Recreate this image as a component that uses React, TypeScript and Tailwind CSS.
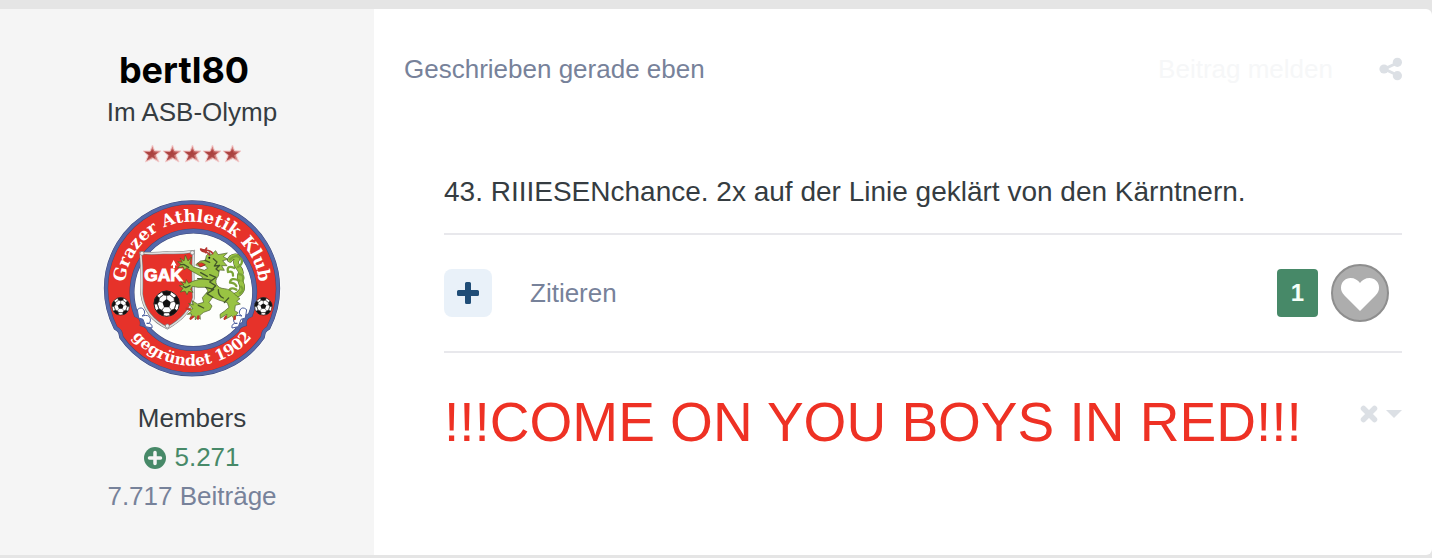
import { useId } from "react";

interface Author {
  name: string;
  title: string;
  rank: number;
  group: string;
  reputation: string;
  posts: string;
}

const author: Author = {
  name: "bertl80",
  title: "Im ASB-Olymp",
  rank: 5,
  group: "Members",
  reputation: "5.271",
  posts: "7.717 Beiträge",
};

const OUTER_RING =
  "M95 440C92 428 95 422 78 412A258 258 0 1 1 536 412C519 422 522 428 519 440A258 258 0 0 1 95 440Z";
const INNER_RING =
  "M140 373A184 184 0 1 1 482 373Q462 380 464 400 446 404 442 419A184 184 0 0 1 180 419Q176 404 158 400 160 380 140 373Z";
const SHIELD =
  "M153 187Q190 190 232 186 270 188 312 182Q308 240 312 320 300 375 233 412 165 380 156 310 158 240 153 187Z";
const TAIL =
  "M402 318C425 322 446 315 455 300 466 283 443 270 452 251 462 234 429 226 441 208 451 195 430 192 421 207";

function RankStar() {
  const id = useId();
  return (
    <svg className="h-5 w-5" viewBox="0 0 20 20" aria-hidden="true">
      <defs>
        <linearGradient id={id} x1="0.2" y1="0" x2="0.7" y2="1">
          <stop offset="0" stopColor="#f6bcbc" />
          <stop offset="0.45" stopColor="#c05a58" />
          <stop offset="1" stopColor="#e0a3a1" />
        </linearGradient>
      </defs>
      <path
        d="M10.5 1 12.6 6.800 19 7 14 11 17 18 10.800 14.500 3.500 18 6 11.400 1.200 7 8 7Z"
        fill={`url(#${id})`}
        stroke="#f3cccc"
        strokeWidth="1"
      />
      <path d="M2 7.500 8.500 8.200 10.300 5 11.400 8.500 15.500 8.800 12 11.300 13.600 15 10 12.800 4.500 16.500 7.600 11.200Z" fill="#a23836" opacity="0.75" />
    </svg>
  );
}

function Ball({ cx, cy, r }: { cx: number; cy: number; r: number }) {
  return (
    <g transform={`translate(${cx} ${cy}) scale(${r / 40})`}>
      <circle r="39" fill="#fff" stroke="#1b1b1b" strokeWidth="3" />
      <path d="M0-14 13-4 8 11-8 11-13-4Z" fill="#111" />
      {[0, 72, 144, 216, 288].map((a) => (
        <g key={a} transform={`rotate(${a})`}>
          <path d="M0-14V-27M-13-36-10-27 0-25 10-27 13-36Q0-42-13-36Z" fill="#111" stroke="#222" strokeWidth="2" />
          <path d="M10-27 22-18" fill="none" stroke="#333" strokeWidth="2" />
          <path d="M-10-27-22-18" fill="none" stroke="#333" strokeWidth="2" />
        </g>
      ))}
    </g>
  );
}

function Crest() {
  return (
    <svg className="h-[180px] w-[180px]" viewBox="37 25 540 540" role="img" aria-label="Grazer Athletik Klub">
      <defs>
        <path id="crest-top" d="M105 295A202 202 0 0 1 509 295" />
        <path id="crest-bottom" d="M77 295A230 230 0 0 0 537 295" />
      </defs>

      {/* Outer ring with the ribbon notches */}
      <path d={OUTER_RING} fill="#e6322a" stroke="#fff" strokeWidth="17" />
      <path d={OUTER_RING} fill="#e6322a" stroke="#3f4a78" strokeWidth="13" />
      <path d={OUTER_RING} fill="none" stroke="#5468aa" strokeWidth="10" />
      <path d={INNER_RING} fill="#fdfefc" stroke="#3f4a78" strokeWidth="15" />
      <path d={INNER_RING} fill="none" stroke="#5468aa" strokeWidth="12" />
      <g fill="#fff" stroke="#4b5e9f" strokeWidth="3">
        <path d="M143 357Q156 346 163 358 169 371 157 376 179 370 182 384 184 400 171 398 190 397 187 412L168 408 160 386 147 382Z" />
        <path d="M471 357Q458 346 451 358 445 371 457 376 435 370 432 384 430 400 443 398 424 397 427 412L446 408 454 386 467 382Z" />
      </g>

      <text
        className="font-['DejaVu_Serif','Liberation_Serif',serif] font-bold"
        fontSize="51"
        fill="#fff"
        textAnchor="middle"
      >
        <textPath href="#crest-top" startOffset="50%">Grazer Athletik Klub</textPath>
      </text>
      <text
        className="font-['DejaVu_Serif','Liberation_Serif',serif] font-bold"
        fontSize="46"
        fill="#fff"
        textAnchor="middle"
      >
        <textPath href="#crest-bottom" startOffset="50%">gegründet 1902</textPath>
      </text>
      <Ball cx={93} cy={347} r={27} />
      <Ball cx={521} cy={347} r={27} />

      {/* Shield */}
      <path d={SHIELD} fill="#e6322a" stroke="#777" strokeWidth="8" />
      <path d={SHIELD} fill="none" stroke="#dedede" strokeWidth="5" />
      <g fill="#eee" stroke="#777" strokeWidth="2">
        <circle cx="157" cy="188" r="6" />
        <circle cx="308" cy="186" r="6" />
        <circle cx="233" cy="406" r="6" />
      </g>
      <text
        x="164"
        y="270"
        fontSize="52"
        fill="#fff"
        stroke="#fff"
        strokeWidth="3"
        className="font-['Liberation_Sans',Arial,sans-serif] font-bold"
      >
        GAK
      </text>
      <path d="M250 232V224L243 225 252 208 261 225 256 224V232Z" fill="#fff" />
      <Ball cx={231} cy={339} r={39} />

      {/* Styrian panther */}
      <g strokeLinecap="round" strokeLinejoin="round">
        <path d={TAIL} fill="none" stroke="#4a5c28" strokeWidth="17" />
        <path d={TAIL} fill="none" stroke="#99c343" strokeWidth="14" />
        <path
          d="M421 206Q442 186 456 207 460 222 445 229M434 232Q410 222 415 244 431 239 430 255M448 250Q467 253 459 270M449 270Q423 258 421 276 435 276 440 286M454 288Q466 299 451 308M440 297Q420 287 418 304"
          fill="none"
          stroke="#7ba437"
          strokeWidth="7"
        />
        <path
          d="M319 222 332 211 347 209 350 195 360 185 363 194 378 180 385 192 413 187 401 198 415 206 399 210 412 225 396 225 404 239 389 238 386 256C370 273 382 294 405 294 430 297 439 318 451 324L441 332 452 340 437 344 435 360 445 366 439 374 435 386 426 375 418 380 408 385 412 371 403 376 392 383 391 371 405 361 418 350 413 336 387 328 369 320 358 335 367 346 361 358 342 365 331 374 332 386 324 378 317 388 316 376 301 384 306 370 293 371 305 362 293 354 310 355 297 338 311 343 307 330 324 340 342 335 338 321 355 301 348 290 325 290 308 287 303 296 310 305 297 302 292 312 286 301 272 304 280 293 269 285 283 283 273 273 287 278 290 267 297 278 309 272 333 265 339 259 325 252 302 239 291 231 285 238 280 228 264 232 274 221 264 213 278 215 271 202 283 211 287 193 295 211 305 199 300 218 312 229 344 239 354 233 346 224 331 228Z"
          fill="#99c343"
          stroke="#4a5c28"
          strokeWidth="2"
        />
        <path
          d="M359 193C359 181 335 187 333 175 346 182 361 174 369 189M348 186C353 178 345 175 351 172"
          fill="none"
          stroke="#b53430"
          strokeWidth="5"
        />
        <path d="M323 219 332 229 347 222 337 217Z" fill="#e6322a" stroke="#812b20" strokeWidth="2" />
        <path
          d="M346 209 360 215M371 204 382 214 374 226 390 224 379 235 387 241M324 264Q350 264 367 270M360 252 379 260 360 274 378 285 366 297M348 290 372 296 352 309 370 320M333 246 353 257M386 297Q385 315 401 322M417 322 404 336M326 344 342 352M301 285 288 291 281 287M297 230 282 221 273 222"
          fill="none"
          stroke="#43572a"
          strokeWidth="4"
        />
        <circle cx="359" cy="201" r="3" fill="#111" />
        <path
          d="M326 377 325 384M310 378 303 384M409 378 405 384M435 378 435 385M300 356 291 354"
          fill="none"
          stroke="#c43428"
          strokeWidth="7"
        />
      </g>
    </svg>
  );
}

function PlusIcon() {
  return (
    <svg className="h-[22px] w-[22px]" viewBox="0 0 22 22" fill="currentColor" aria-hidden="true">
      <path d="M9.5 0h3A1.5 1.5 0 0 1 14 1.5V8h6.5A1.5 1.5 0 0 1 22 9.5v3a1.5 1.5 0 0 1-1.5 1.5H14v6.5a1.5 1.5 0 0 1-1.5 1.5h-3A1.5 1.5 0 0 1 8 20.500V14H1.500A1.500 1.500 0 0 1 0 12.500v-3A1.500 1.500 0 0 1 1.500 8H8V1.500A1.500 1.500 0 0 1 9.500 0Z" />
    </svg>
  );
}

function AuthorPane() {
  return (
    <aside className="flex w-[374px] shrink-0 flex-col items-center bg-[#f5f5f5] pt-10 pb-[39px] pl-2.5 text-[26px] leading-[39px] text-[#353c41]">
      <h3 className="pr-4 font-[Inter,sans-serif] text-[36px] leading-[42px] font-bold text-black">{author.name}</h3>
      <p className="mt-0.5">{author.title}</p>
      <div className="mt-3 flex" role="img" aria-label="5 Sterne">
        {Array.from({ length: author.rank }, (_, i) => (
          <RankStar key={i} />
        ))}
      </div>
      <a href="#profil" className="mt-[35px] block">
        <Crest />
      </a>
      <p className="mt-5">{author.group}</p>
      <p className="flex items-center gap-2 text-[#478968]">
        <svg className="h-[22px] w-[22px]" viewBox="0 0 22 22" aria-hidden="true">
          <circle cx="11" cy="11" r="11" fill="currentColor" />
          <path d="M11 5.500v11M5.500 11h11" stroke="#f5f5f5" strokeWidth="3.500" strokeLinecap="round" />
        </svg>
        {author.reputation}
      </p>
      <a href="#beitraege" className="text-[#77829a]">{author.posts}</a>
    </aside>
  );
}

export default function App() {
  return (
    <main className="bg-[#e5e5e5] pt-[9px] pb-[3px] font-['Liberation_Sans',Arial,sans-serif]">
      <article className="flex overflow-hidden rounded-r-md bg-white">
        <AuthorPane />

        <div className="min-w-0 flex-1 px-[30px] pt-10">
          <header className="flex items-center text-[26px] leading-10 text-[#77829a]">
            <a href="#beitrag">Geschrieben gerade eben</a>
            <a href="#melden" className="ml-auto text-[#f6f7f8]">Beitrag melden</a>
            <button type="button" aria-label="Teilen" className="ml-[46px] cursor-pointer text-[#dce0e5]">
              <svg className="h-6 w-[23px]" viewBox="0 0 23 24" aria-hidden="true">
                <path d="M19 5.500 5.500 12 19 18.500" fill="none" stroke="currentColor" strokeWidth="3" />
                <g fill="currentColor">
                  <circle cx="5" cy="12" r="4.600" />
                  <circle cx="18.400" cy="5.300" r="4.600" />
                  <circle cx="18.400" cy="18.700" r="4.600" />
                </g>
              </svg>
            </button>
          </header>

          <div className="pl-10">
            <p className="pt-[83px] pb-[21px] text-[28px] leading-10 text-[#353c41]">
              43. RIIIESENchance. 2x auf der Linie geklärt von den Kärntnern.
            </p>

            {/* Quote and reaction controls */}
            <div className="flex items-center border-y-2 border-[#e8e8ec] py-[29px] pr-[13px]">
              <button
                type="button"
                aria-label="Mehrfach zitieren"
                className="flex h-12 w-12 cursor-pointer items-center justify-center rounded-lg bg-[#e9f1f9] text-[#204d77]"
              >
                <PlusIcon />
              </button>
              <button type="button" className="ml-[38px] cursor-pointer text-[26px] leading-10 text-[#77829a]">
                Zitieren
              </button>
              <button
                type="button"
                aria-label="1 Reaktion"
                className="ml-auto flex h-12 w-[41px] cursor-pointer items-center justify-center rounded bg-[#478968] text-[24px] font-bold text-[#f5fff8]"
              >
                1
              </button>
              <button type="button" aria-label="Gefällt mir" className="ml-[13px] cursor-pointer">
                <svg className="h-[58px] w-[58px]" viewBox="0 0 58 58" aria-hidden="true">
                  <circle cx="29" cy="29" r="28" fill="#adadad" stroke="#8e8e8e" strokeWidth="2" />
                  <path d="M29 47 13.500 31.500C10.500 28.500 10 26 10 23.500 10 18 14.500 14 19.500 14 23.500 14 27 16 29 19 31 16 34.500 14 38.500 14 43.500 14 48 18 48 23.500 48 26 47.500 28.500 44.500 31.500Z" fill="#fff" />
                </svg>
              </button>
            </div>

            <div className="flex items-start justify-between pt-9">
              <p className="text-[55px] leading-[66px] whitespace-nowrap text-[#ee3124]">!!!COME ON YOU BOYS IN RED!!!</p>
              <button type="button" aria-label="Signatur ausblenden" className="mt-4 flex cursor-pointer items-center gap-2 text-[#dce0e5]">
                <svg className="h-[18px] w-[18px]" viewBox="0 0 18 18" aria-hidden="true">
                  <path d="M3.500 3.500 14.500 14.500M14.500 3.500 3.500 14.500" stroke="currentColor" strokeWidth="5.500" strokeLinecap="round" />
                </svg>
                <svg className="h-2 w-4" viewBox="0 0 16 8" aria-hidden="true">
                  <path d="M0 0H16L8 8Z" fill="currentColor" />
                </svg>
              </button>
            </div>
          </div>
        </div>
      </article>
    </main>
  );
}
